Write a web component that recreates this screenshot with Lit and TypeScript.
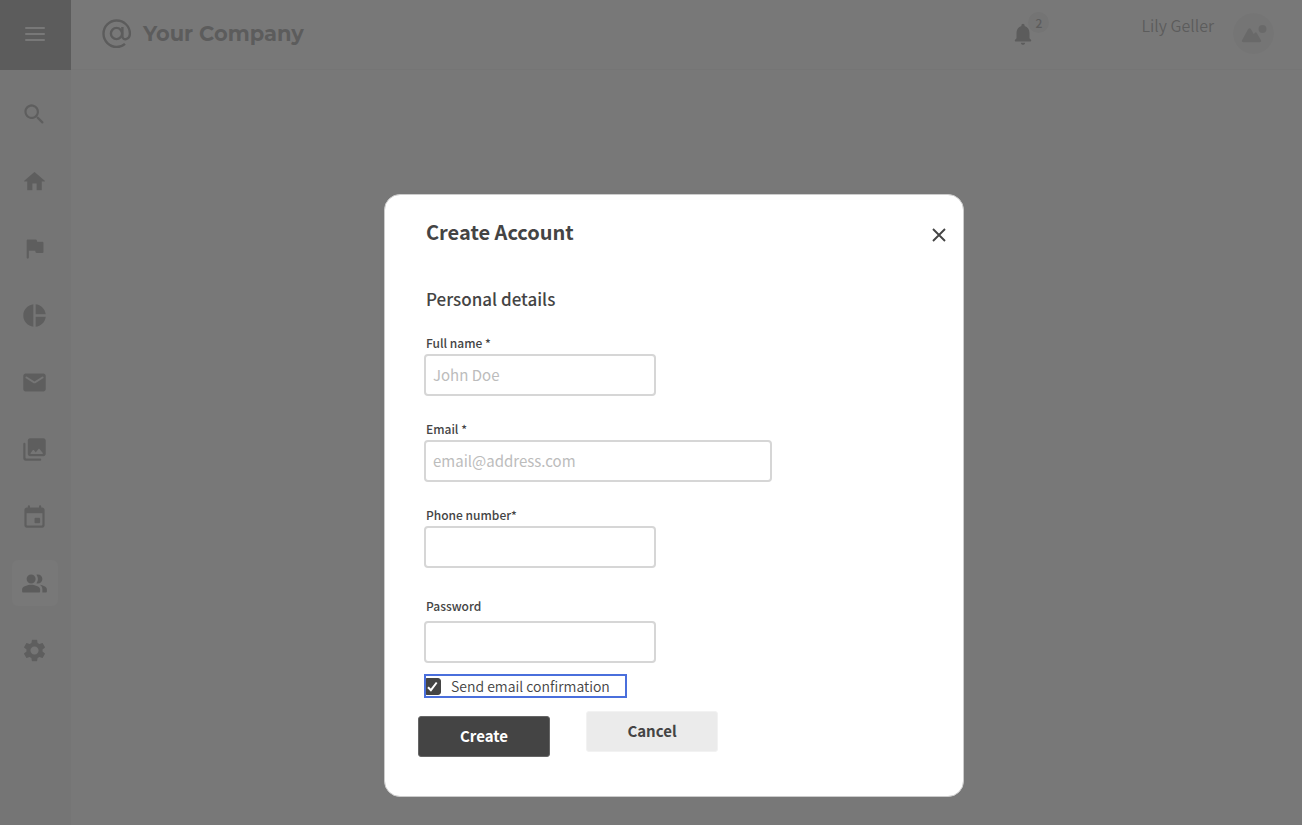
import { LitElement, html, css, svg } from "lit";
import { customElement, state } from "lit/decorators.js";
import { classMap } from "lit/directives/class-map.js";

interface NavItem {
  label: string;
  path: string;
  size: number;
}

const NAV: NavItem[] = [
  {
    label: "Search",
    size: 27,
    path: "M15.5 14h-.79l-.28-.27c1.2-1.4 1.82-3.31 1.48-5.34-.47-2.78-2.79-5-5.59-5.34-4.23-.52-7.79 3.04-7.27 7.27.34 2.8 2.56 5.12 5.34 5.59 2.03.34 3.94-.28 5.34-1.48l.27.28v.79l4.25 4.25c.41.41 1.08.41 1.49 0 .41-.41.41-1.08 0-1.49L15.5 14zm-6 0C7.01 14 5 11.99 5 9.5S7.01 5 9.5 5 14 7.01 14 9.5 11.99 14 9.5 14z",
  },
  {
    label: "Home",
    size: 25,
    path: "M10 20v-6h4v6c0 .3.2.5.5.5h4c.3 0 .5-.2.5-.5v-8h2.6c.4 0 .6-.5.3-.8L12.7 3.3a1 1 0 0 0-1.4 0L2.1 11.2c-.3.3-.1.8.3.8H5v8c0 .3.2.5.5.5h4c.3 0 .5-.2.5-.5z",
  },
  {
    label: "Goals",
    size: 27,
    path: "M14.4 6l-.24-1.2c-.09-.46-.5-.8-.98-.8H6c-.55 0-1 .45-1 1v15c0 .55.45 1 1 1s1-.45 1-1v-6h5.6l.24 1.2c.09.47.5.8.98.8H19c.55 0 1-.45 1-1V7c0-.55-.45-1-1-1h-4.6z",
  },
  {
    label: "Reports",
    size: 27,
    path: "M11 2v20c-5.07-.5-9-4.79-9-10s3.93-9.5 9-10zm2.03 0v8.99H22c-.47-4.74-4.24-8.52-8.97-8.99zm0 11.01V22c4.74-.47 8.5-4.25 8.97-8.99h-8.97z",
  },
  {
    label: "Mail",
    size: 27,
    path: "M20 4H4c-1.1 0-1.99.9-1.99 2L2 18c0 1.1.9 2 2 2h16c1.1 0 2-.9 2-2V6c0-1.1-.9-2-2-2zm-.4 4.25l-6.54 4.09c-.65.41-1.47.41-2.12 0L4.4 8.25a.85.85 0 1 1 .9-1.44L12 11l6.7-4.19a.85.85 0 1 1 .9 1.44z",
  },
  {
    label: "Gallery",
    size: 27,
    path: "M22 16V4c0-1.1-.9-2-2-2H8c-1.1 0-2 .9-2 2v12c0 1.1.9 2 2 2h12c1.1 0 2-.9 2-2zm-10.6-3.47l1.63 2.18 2.58-3.22a.5.5 0 0 1 .78 0l2.96 3.7c.26.33.03.81-.39.81H9a.5.5 0 0 1-.4-.8l2-2.67c.2-.26.6-.26.8 0zM2 7v13c0 1.1.9 2 2 2h13c.55 0 1-.45 1-1s-.45-1-1-1H5c-.55 0-1-.45-1-1V7c0-.55-.45-1-1-1s-1 .45-1 1z",
  },
  {
    label: "Calendar",
    size: 27,
    path: "M16 13h-3c-.55 0-1 .45-1 1v3c0 .55.45 1 1 1h3c.55 0 1-.45 1-1v-3c0-.55-.45-1-1-1zm0-10v1H8V3c0-.55-.45-1-1-1s-1 .45-1 1v1H5c-1.11 0-1.99.9-1.99 2L3 20c0 1.1.89 2 2 2h14c1.1 0 2-.9 2-2V6c0-1.1-.9-2-2-2h-1V3c0-.55-.45-1-1-1s-1 .45-1 1zm2 17H6c-.55 0-1-.45-1-1V9h14v10c0 .55-.45 1-1 1z",
  },
  {
    label: "Users",
    size: 27,
    path: "M16.67 13.13C18.04 14.06 19 15.32 19 17v3h3c.55 0 1-.45 1-1v-2c0-2.18-3.57-3.47-6.33-3.87zM9 12a4 4 0 1 0 0-8 4 4 0 0 0 0 8zM15 12c2.21 0 4-1.79 4-4s-1.79-4-4-4c-.47 0-.91.1-1.33.24C14.5 5.27 15 6.58 15 8s-.5 2.73-1.33 3.76c.42.14.86.24 1.33.24zM9 13c-2.67 0-8 1.34-8 4v2c0 .55.45 1 1 1h14c.55 0 1-.45 1-1v-2c0-2.66-5.33-4-8-4z",
  },
  {
    label: "Settings",
    size: 27,
    path: "M19.14 12.94c.04-.3.06-.61.06-.94 0-.32-.02-.64-.07-.94l2.03-1.58c.18-.14.23-.41.12-.61l-1.92-3.32c-.12-.22-.37-.29-.59-.22l-2.39.96c-.5-.38-1.03-.7-1.62-.94l-.36-2.54c-.04-.24-.24-.41-.48-.41h-3.84c-.24 0-.43.17-.47.41l-.36 2.54c-.59.24-1.13.57-1.62.94l-2.39-.96c-.22-.08-.47 0-.59.22L2.74 8.87c-.12.21-.08.47.12.61l2.03 1.58c-.05.3-.09.63-.09.94s.02.64.07.94l-2.03 1.58c-.18.14-.23.41-.12.61l1.92 3.32c.12.22.37.29.59.22l2.39-.96c.5.38 1.03.7 1.62.94l.36 2.54c.05.24.24.41.48.41h3.84c.24 0 .44-.17.47-.41l.36-2.54c.59-.24 1.13-.56 1.62-.94l2.39.96c.22.08.47 0 .59-.22l1.92-3.32c.12-.22.07-.47-.12-.61l-2.01-1.58zM12 15.6c-1.98 0-3.6-1.62-3.6-3.6s1.62-3.6 3.6-3.6 3.6 1.62 3.6 3.6-1.62 3.6-3.6 3.6z",
  },
];

@customElement("account-dialog")
export class AccountDialog extends LitElement {
  static styles = css`
    :host {
      display: block;
      width: 100%;
      max-width: 580px;
    }
    * {
      box-sizing: border-box;
    }
    .dialog {
      padding: 21px 12px 39px 33px;
      background: #fff;
      border: 1px solid #ccc;
      border-radius: 16px;
      color: #444;
    }
    .head {
      display: flex;
      justify-content: space-between;
      align-items: center;
      padding-left: 8px;
    }
    .title {
      margin: 0;
      font-size: 20px;
      line-height: 32px;
      font-weight: 700;
    }
    .close {
      display: grid;
      place-items: center;
      width: 24px;
      height: 24px;
      margin-top: 5px;
      padding: 0;
      border: 0;
      background: none;
      color: inherit;
      cursor: pointer;
    }
    .section {
      margin: 39px 0 23px 8px;
      font-size: 17px;
      line-height: 24px;
      font-weight: 500;
    }
    .fields {
      display: flex;
      flex-direction: column;
      align-items: flex-start;
      gap: 24px;
      padding-left: 6px;
    }
    .field {
      display: flex;
      flex-direction: column;
      gap: 2px;
      width: 232px;
      max-width: 100%;
    }
    .wide {
      width: 348px;
    }
    .secret {
      gap: 6px;
      margin-top: 5px;
    }
    .label {
      padding-left: 2px;
      font-size: 12px;
      line-height: 18px;
      font-weight: 500;
    }
    .input {
      width: 100%;
      height: 42px;
      padding: 0 7px 1px;
      border: 2px solid #d6d6d6;
      border-radius: 4px;
      background: #fff;
      color: #444;
      font: inherit;
      font-size: 15px;
    }
    .input::placeholder {
      color: #bcbcbc;
      opacity: 1;
    }
    .confirm {
      display: inline-flex;
      align-items: center;
      gap: 10px;
      height: 24px;
      margin: 11px 0 0 6px;
      padding-right: 17px;
      outline: 2px solid #4a6fdc;
      outline-offset: -2px;
      font-size: 14px;
      line-height: 24px;
      font-weight: 350;
    }
    .tick {
      display: grid;
      width: 17px;
      height: 17px;
    }
    .box,
    .mark {
      grid-area: 1 / 1;
      width: 17px;
      height: 17px;
      margin: 0;
    }
    .box {
      appearance: none;
      border: 1px solid #444;
      border-radius: 3px;
      background: #fff;
    }
    .box:checked {
      background: #444;
    }
    .mark {
      pointer-events: none;
    }
    .actions {
      display: flex;
      align-items: flex-start;
      gap: 36px;
      height: 46px;
      margin-top: 11px;
    }
    .button {
      width: 132px;
      height: 41px;
      padding: 0;
      border: 1px solid #f2f2f2;
      border-radius: 3px;
      background: #ebebeb;
      color: #444;
      font: inherit;
      font-size: 15px;
      line-height: 24px;
      font-weight: 700;
      cursor: pointer;
    }
    .primary {
      align-self: flex-end;
      border-color: #666;
      background: #444;
      color: #fff;
    }
  `;

  @state() private confirm = true;

  render() {
    return html`
      <section class="dialog" role="dialog" aria-labelledby="title">
        <header class="head">
          <h1 class="title" id="title">Create Account</h1>
          <button class="close" type="button" aria-label="Close">
            <svg width="14" height="14" viewBox="0 0 14 14" fill="none" stroke="currentColor" stroke-width="1.9">
              <path d="M1 1l12 12M13 1L1 13" />
            </svg>
          </button>
        </header>
        <h2 class="section">Personal details</h2>
        <form @submit=${(e: Event) => e.preventDefault()}>
          <div class="fields">
            <div class="field">
              <label class="label" for="name">Full name *</label>
              <input class="input" id="name" type="text" placeholder="John Doe" />
            </div>
            <div class="field wide">
              <label class="label" for="email">Email *</label>
              <input class="input" id="email" type="email" placeholder="email@address.com" />
            </div>
            <div class="field">
              <label class="label" for="phone">Phone number*</label>
              <input class="input" id="phone" type="tel" />
            </div>
            <div class="field secret">
              <label class="label" for="password">Password</label>
              <input class="input" id="password" type="password" />
            </div>
          </div>
          <label class="confirm">
            <span class="tick">
              <input
                class="box"
                type="checkbox"
                .checked=${this.confirm}
                @change=${(e: Event) => (this.confirm = (e.target as HTMLInputElement).checked)}
              />
              ${this.confirm
                ? html`<svg class="mark" viewBox="0 0 17 17" fill="none" stroke="#fff" stroke-width="2">
                    <path d="M4 9.2l2.9 3L12.7 4.5" />
                  </svg>`
                : null}
            </span>
            Send email confirmation
          </label>
          <div class="actions">
            <button class="button primary" type="submit">Create</button>
            <button class="button" type="button">Cancel</button>
          </div>
        </form>
      </section>
    `;
  }
}

@customElement("app-root")
export class AppRoot extends LitElement {
  static styles = css`
    :host {
      display: block;
      font-family: "Noto Sans CJK SC", "Noto Sans", sans-serif;
      color: #444;
    }
    * {
      box-sizing: border-box;
    }
    .shell {
      display: grid;
      grid-template-columns: 71px 1fr;
      grid-template-rows: 70px 1fr;
      min-height: 100vh;
      background: #fff;
    }
    .menu {
      display: grid;
      place-items: center;
      padding: 0 1px 2px 0;
      border: 0;
      background: #444;
      color: #fff;
    }
    .header {
      display: flex;
      align-items: center;
      padding: 0 28px 2px 31px;
      border-bottom: 1px solid #ebebeb;
    }
    .brand {
      display: flex;
      align-items: center;
      gap: 11px;
      margin-right: auto;
      color: #444;
      font-family: "Montserrat", "Inter", sans-serif;
      font-size: 21px;
      line-height: 32px;
      font-weight: 700;
      text-decoration: none;
    }
    .bell {
      position: relative;
      display: grid;
      width: 26px;
      height: 26px;
      margin-right: 105px;
      padding: 0;
      border: 0;
      background: none;
      color: #444;
      font: inherit;
    }
    .count {
      position: absolute;
      left: 18px;
      top: -9px;
      width: 21px;
      height: 21px;
      border-radius: 50%;
      background: #e0e0e0;
      font-size: 12px;
      line-height: 21px;
      font-weight: 500;
      text-align: center;
    }
    .user {
      padding-bottom: 18px;
      font-size: 16px;
      line-height: 24px;
      font-weight: 350;
    }
    .avatar {
      display: grid;
      place-items: center;
      width: 41px;
      height: 41px;
      margin-left: 19px;
      border-radius: 50%;
      background: #ebebeb;
      color: #9c9c9c;
    }
    .nav {
      display: flex;
      flex-direction: column;
      gap: 21px;
      padding: 21px 13px 21px 12px;
      background: #ebebeb;
    }
    .item {
      display: grid;
      place-items: center;
      height: 46px;
      padding-right: 1px;
      border-radius: 6px;
      color: #555;
    }
    .active {
      background: #fafafa;
      color: #444;
    }
    .overlay {
      position: fixed;
      inset: 0;
      display: flex;
      justify-content: center;
      align-items: flex-start;
      padding: 194px 0 28px 46px;
      overflow: auto;
      background: rgba(96, 96, 96, 0.85);
    }
  `;

  @state() private current = "Users";

  render() {
    return html`
      <div class="shell">
        <button class="menu" type="button" aria-label="Menu">
          <svg width="20" height="14" viewBox="0 0 20 14" fill="none" stroke="currentColor" stroke-width="2" stroke-linecap="round">
            <path d="M1 1h18M1 7h18M1 13h18" />
          </svg>
        </button>
        <header class="header">
          <a class="brand" href="#">
            <svg width="30" height="30" viewBox="0 0 30 30" fill="none" stroke="currentColor" stroke-width="2.4">
              <circle cx="14.5" cy="14.5" r="5.6" />
              <path d="M20.4 8v9.2c0 5 7.5 3.5 7.5-2.7A13.2 13.2 0 1 0 14.7 27.9c3.3 0 6.1-1.2 8.3-3.1" />
            </svg>
            <span>Your Company</span>
          </a>
          <button class="bell" type="button" aria-label="Notifications">
            <svg width="26" height="26" viewBox="0 0 24 24" fill="currentColor">
              <path
                d="M12 22c1.1 0 2-.9 2-2h-4c0 1.1.89 2 2 2zm6-6v-5c0-3.07-1.64-5.64-4.5-6.32V4c0-.83-.67-1.5-1.5-1.5s-1.5.67-1.5 1.5v.68C7.63 5.36 6 7.92 6 11v5l-1.3 1.3c-.63.63-.19 1.7.7 1.7h13.2c.89 0 1.34-1.08.71-1.71L18 16z"
              />
            </svg>
            <span class="count">2</span>
          </button>
          <span class="user">Lily Geller</span>
          <span class="avatar">
            <svg width="26" height="18" viewBox="0 0 26 18" fill="currentColor">
              <circle cx="21.5" cy="4" r="4" />
              <path d="M1 15.2L7 4.3c.8-1.4 2.3-1.4 3.1 0l2.6 4.6.9-1c.8-.8 1.8-.7 2.4.3l4 7c.6 1.2 0 2-1.2 2H2.2c-1.2 0-1.8-.8-1.2-2z" />
            </svg>
          </span>
        </header>
        <nav class="nav">
          ${NAV.map(
            (item) => html`<a
              class=${classMap({ item: true, active: item.label === this.current })}
              href="#"
              aria-label=${item.label}
              @click=${() => (this.current = item.label)}
            >
              <svg width=${item.size} height=${item.size} viewBox="0 0 24 24" fill="currentColor">
                ${svg`<path fill-rule="evenodd" d=${item.path} />`}
              </svg>
            </a>`
          )}
        </nav>
        <main></main>
      </div>
      <div class="overlay">
        <account-dialog></account-dialog>
      </div>
    `;
  }
}
